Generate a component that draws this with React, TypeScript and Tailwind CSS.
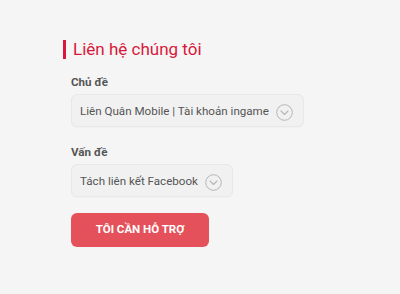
const ChevronCircle = () => (
  <svg width="17" height="17" viewBox="0 0 17 17" fill="none" className="shrink-0 mt-[4px]">
    <circle cx="8.5" cy="8.5" r="7.8" stroke="#b5b5b5" strokeWidth="1" />
    <path d="M5 7l3.5 3.5L12 7" stroke="#b5b5b5" strokeWidth="1.1" strokeLinecap="round" strokeLinejoin="round" />
  </svg>
);

const Select = ({ value }: { value: string }) => (
  <div className="inline-flex self-start items-center h-[33px] pl-[8px] pr-[10px] gap-[7px] rounded-[6px] border border-[#e8e8e8] bg-[#f1f1f1] shadow-[0_1px_1px_rgba(0,0,0,0.02)]">
    <span className="text-[11.6px] leading-[16px] text-[#555555] whitespace-nowrap">{value}</span>
    <ChevronCircle />
  </div>
);

export default function App() {
  return (
    <div className="w-[400px] h-[294px] bg-[#f5f5f5] font-['Roboto',sans-serif] pt-[38px] pl-[63px]">
      <div className="flex flex-col">
        <div className="flex items-center gap-[7px]">
          <span className="w-[3px] h-[19px] bg-[#d8183a]" />
          <h2 className="text-[17px] leading-[22px] text-[#d8183a]">Liên hệ chúng tôi</h2>
        </div>

        <div className="flex flex-col pl-[8px]">
          <label className="mt-[14px] text-[11.6px] leading-[16px] font-bold text-[#555555]">Chủ đề</label>
          <div className="mt-[4px] flex">
            <Select value="Liên Quân Mobile | Tài khoản ingame" />
          </div>

          <label className="mt-[17px] text-[11.6px] leading-[16px] font-bold text-[#555555]">Vấn đề</label>
          <div className="mt-[4px] flex">
            <Select value="Tách liên kết Facebook" />
          </div>

          <button className="mt-[16px] self-start w-[138px] h-[34px] rounded-[6px] bg-[#e5515a] text-white text-[11.5px] font-bold">
            TÔI CẦN HỖ TRỢ
          </button>
        </div>
      </div>
    </div>
  );
}
